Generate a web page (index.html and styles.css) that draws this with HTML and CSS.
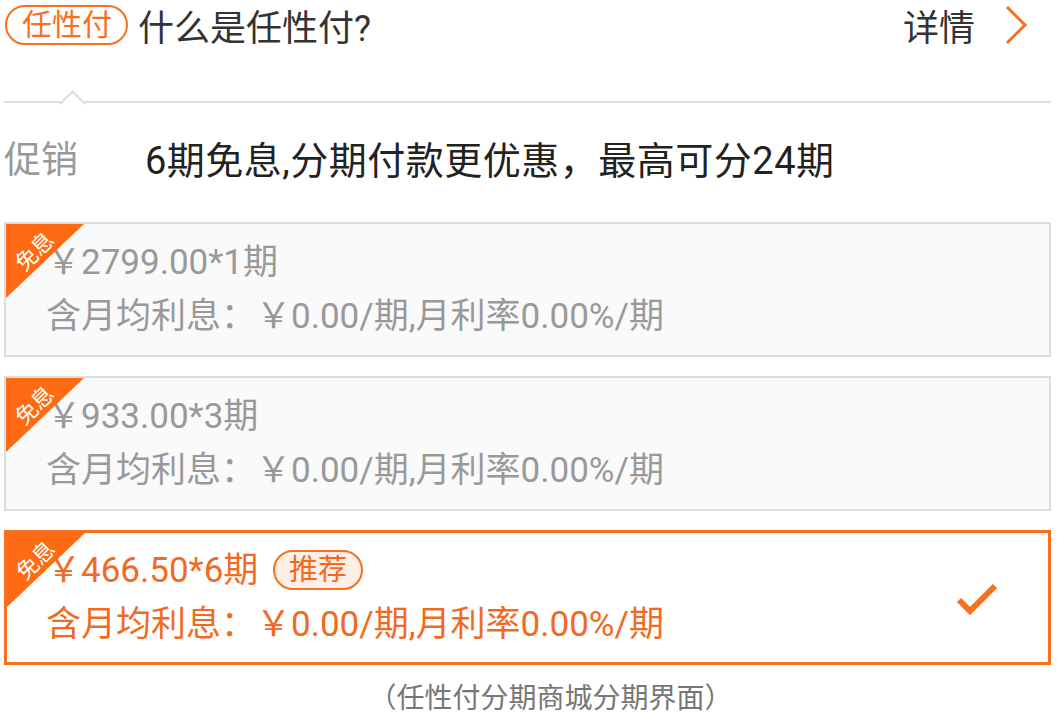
FILE: index.html
```html
<!DOCTYPE html>
<html lang="zh-CN">
<head>
  <meta charset="UTF-8" />
  <meta name="viewport" content="width=device-width, initial-scale=1.0"/>
  <title>任性付分期</title>
  <link rel="stylesheet" href="styles.css">
</head>
<body>

  <div class="page">
    <header class="top">
      <span class="badge">任性付</span>
      <span class="title">什么是任性付?</span>
      <a href="#" class="more">详情
        <svg class="chevron" width="26" height="42" viewBox="0 0 26 42">
          <polyline points="4,3 22,21 4,39" fill="none" stroke="#f5701f" stroke-width="3"/>
        </svg>
      </a>
    </header>

    <div class="divider"></div>

    <div class="promo">
      <span class="promo-label">促销</span>
      <span class="promo-text">6期免息,分期付款更优惠，最高可分24期</span>
    </div>

    <div class="plan">
      <div class="tag"><span>免息</span></div>
      <div class="plan-info">
        <div class="price">￥2799.00*1期</div>
        <div class="rate">含月均利息：￥0.00/期,月利率0.00%/期</div>
      </div>
    </div>

    <div class="plan">
      <div class="tag"><span>免息</span></div>
      <div class="plan-info">
        <div class="price">￥933.00*3期</div>
        <div class="rate">含月均利息：￥0.00/期,月利率0.00%/期</div>
      </div>
    </div>

    <div class="plan active">
      <div class="tag"><span>免息</span></div>
      <div class="plan-info">
        <div class="price">￥466.50*6期 <span class="hot">推荐</span></div>
        <div class="rate">含月均利息：￥0.00/期,月利率0.00%/期</div>
      </div>
      <svg class="check" width="42" height="34" viewBox="0 0 42 34">
        <polyline points="3,19 14,30 39,5" fill="none" stroke="#f5701f" stroke-width="6"/>
      </svg>
    </div>

    <p class="caption">（任性付分期商城分期界面）</p>
  </div>

</body>
</html>
```

FILE: styles.css
```css
body {
  margin: 0;
  background-color: #fff;
  font-family: Roboto, "Noto Sans CJK SC", sans-serif;
  color: #333;
}

.page {
  padding: 0 8px 0 4px;
}

.top {
  display: flex;
  align-items: center;
  height: 49px;
}

.badge {
  margin-left: 1px;
  border: 2px solid #f5701f;
  border-radius: 20px;
  padding: 0 14px 0 15px;
  line-height: 36px;
  font-size: 30px;
  color: #f5701f;
}

.title {
  margin-left: 10px;
  font-size: 36px;
  color: #333;
}

.more {
  margin-left: auto;
  margin-right: 22px;
  display: flex;
  align-items: center;
  font-size: 36px;
  color: #333;
  text-decoration: none;
}

.chevron {
  margin-left: 28px;
}

.divider {
  position: relative;
  margin-top: 52px;
  border-top: 2px solid #ddd;
}

.divider::after {
  content: "";
  position: absolute;
  left: 59px;
  top: -9px;
  width: 17px;
  height: 17px;
  background-color: #fff;
  border-top: 2px solid #ddd;
  border-left: 2px solid #ddd;
  transform: rotate(45deg);
}

.promo {
  display: flex;
  align-items: center;
  margin: 38px 0 41px;
  line-height: 40px;
}

.promo-label {
  width: 141px;
  font-size: 37px;
  color: #999;
}

.promo-text {
  font-size: 38px;
  letter-spacing: 0.5px;
  color: #222;
}

.plan {
  position: relative;
  display: flex;
  align-items: center;
  height: 135px;
  box-sizing: border-box;
  margin-bottom: 19px;
  border: 2px solid #ddd;
  background-color: #fafafa;
  color: #999;
  overflow: hidden;
}

.plan-info {
  padding-left: 40px;
}

.price,
.rate {
  font-size: 35px;
  line-height: 44px;
}

.rate {
  margin-top: 10px;
}

.tag {
  position: absolute;
  left: 0;
  top: 0;
  width: 78px;
  height: 74px;
  background-color: #ff6a12;
  clip-path: polygon(0 0, 100% 0, 0 100%);
}

.tag span {
  position: absolute;
  left: 7px;
  top: 16px;
  font-size: 22px;
  line-height: 24px;
  color: #fff;
  transform: rotate(-45deg);
}

.active {
  border: 3px solid #f5701f;
  background-color: #fff;
  color: #f26a1f;
}

.active .plan-info {
  padding-left: 39px;
}

.hot {
  display: inline-block;
  margin-left: 6px;
  padding: 0 14px;
  border: 2px solid #f5701f;
  border-radius: 20px;
  background-color: #fdeee6;
  font-size: 29px;
  line-height: 36px;
  vertical-align: 2px;
}

.check {
  margin-left: auto;
  margin-right: 50px;
}

.caption {
  margin: 13px 0 0;
  padding-left: 46px;
  text-align: center;
  font-family: "Liberation Serif", "Noto Sans CJK SC", serif;
  font-size: 28px;
  line-height: 30px;
  color: #777;
}
```
